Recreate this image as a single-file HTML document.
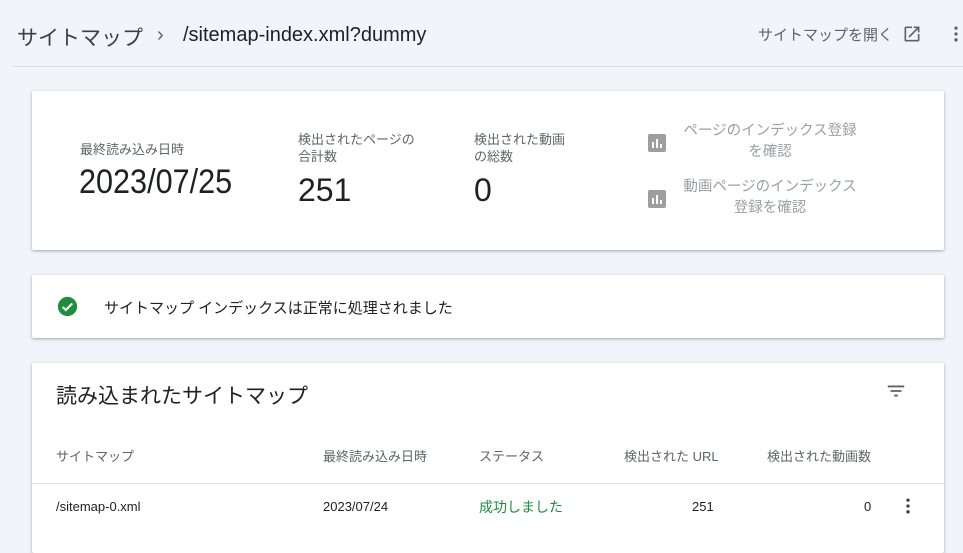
<!DOCTYPE html>
<html><head><meta charset="utf-8"><style>
*{margin:0;padding:0;box-sizing:border-box}
body{width:963px;height:536px;overflow:hidden;background:#f1f4f9;font-family:"Liberation Sans","Noto Sans CJK JP",sans-serif;color:#202124;position:relative}
.a{position:absolute;white-space:nowrap}
.card{position:absolute;left:32px;width:912px;background:#fff;border-radius:2px;box-shadow:0 1px 3px rgba(60,64,67,.3),0 1px 2px rgba(60,64,67,.15)}
.g{color:#5f6368}
.ico{position:absolute;width:18px;height:18px;background:#9e9e9e;border-radius:2px}
.ico i{position:absolute;bottom:4px;width:2px;background:#fff}
</style></head><body>
<div class="a" style="left:17px;top:22px;font-size:21px;color:#3c4043">サイトマップ</div>
<div class="a" style="left:157px;top:24px;font-size:20px;color:#5f6368">›</div>
<div class="a" style="left:183px;top:24px;font-size:20px;color:#202124">/sitemap-index.xml?dummy</div>
<div class="a g" style="left:758px;top:24px;font-size:15px">サイトマップを開く</div>
<svg class="a" style="left:902px;top:24px" width="20" height="20" viewBox="0 0 24 24"><path fill="#5f6368" d="M19 19H5V5h7V3H5a2 2 0 0 0-2 2v14a2 2 0 0 0 2 2h14c1.1 0 2-.9 2-2v-7h-2v7zM14 3v2h3.59l-9.83 9.83 1.41 1.41L19 6.41V10h2V3h-7z"/></svg>
<svg class="a" style="left:946px;top:24px" width="20" height="20" viewBox="0 0 24 24"><circle cx="12" cy="5" r="2" fill="#5f6368"/><circle cx="12" cy="12" r="2" fill="#5f6368"/><circle cx="12" cy="19" r="2" fill="#5f6368"/></svg>
<div class="a" style="left:13px;top:66px;width:950px;height:1px;background:#dadce0"></div>

<div class="card" style="top:91px;height:159px"></div>
<div class="a g" style="left:80px;top:139px;font-size:13px">最終読み込み日時</div>
<div class="a" style="left:79px;top:163px;font-size:34px;transform:scaleX(0.9);transform-origin:left">2023/07/25</div>
<div class="a g" style="left:298px;top:131px;font-size:13px;line-height:17px">検出されたページの<br>合計数</div>
<div class="a" style="left:298px;top:172px;font-size:32px">251</div>
<div class="a g" style="left:474px;top:131px;font-size:13px;line-height:17px">検出された動画<br>の総数</div>
<div class="a" style="left:474px;top:172px;font-size:32px">0</div>
<div class="ico" style="left:648px;top:134px"><i style="left:4px;height:6px"></i><i style="left:8px;height:9px"></i><i style="left:12px;height:4px"></i></div>
<div class="a" style="left:672px;top:121px;font-size:14.5px;line-height:21px;color:#9aa0a6;text-align:center;width:196px">ページのインデックス登録<br>を確認</div>
<div class="ico" style="left:648px;top:190px"><i style="left:4px;height:6px"></i><i style="left:8px;height:9px"></i><i style="left:12px;height:4px"></i></div>
<div class="a" style="left:672px;top:177px;font-size:14.5px;line-height:21px;color:#9aa0a6;text-align:center;width:196px">動画ページのインデックス<br>登録を確認</div>

<div class="card" style="top:275px;height:63px"></div>
<svg class="a" style="left:57px;top:296px" width="21" height="21" viewBox="0 0 24 24"><circle cx="12" cy="12" r="11" fill="#1e8e3e"/><path d="M6.5 12.5l3.5 3.5 7.5-7.5" stroke="#fff" stroke-width="2.4" fill="none"/></svg>
<div class="a" style="left:104px;top:297px;font-size:15px">サイトマップ インデックスは正常に処理されました</div>

<div class="card" style="top:363px;height:190px"></div>
<div class="a" style="left:56px;top:380px;font-size:21px">読み込まれたサイトマップ</div>
<svg class="a" style="left:885px;top:380px" width="22" height="22" viewBox="0 0 24 24"><path fill="#5f6368" d="M3 6h18v2H3zM6 11h12v2H6zM10 16h4v2h-4z"/></svg>
<div class="a g" style="left:56px;top:446px;font-size:13px">サイトマップ</div>
<div class="a g" style="left:323px;top:446px;font-size:13px">最終読み込み日時</div>
<div class="a g" style="left:479px;top:446px;font-size:13px">ステータス</div>
<div class="a g" style="left:624px;top:446px;font-size:13px">検出された URL</div>
<div class="a g" style="left:767px;top:446px;font-size:13px">検出された動画数</div>
<div class="a" style="left:32px;top:483px;width:912px;height:1px;background:#e0e0e0"></div>
<div class="a" style="left:56px;top:499px;font-size:13px">/sitemap-0.xml</div>
<div class="a" style="left:323px;top:499px;font-size:13px">2023/07/24</div>
<div class="a" style="left:479px;top:497px;font-size:14px;color:#1e8e3e">成功しました</div>
<div class="a" style="left:692px;top:499px;font-size:13px">251</div>
<div class="a" style="left:864px;top:499px;font-size:13px">0</div>
<svg class="a" style="left:898px;top:496px" width="20" height="20" viewBox="0 0 24 24"><circle cx="12" cy="5" r="2" fill="#3c4043"/><circle cx="12" cy="12" r="2" fill="#3c4043"/><circle cx="12" cy="19" r="2" fill="#3c4043"/></svg>
</body></html>
